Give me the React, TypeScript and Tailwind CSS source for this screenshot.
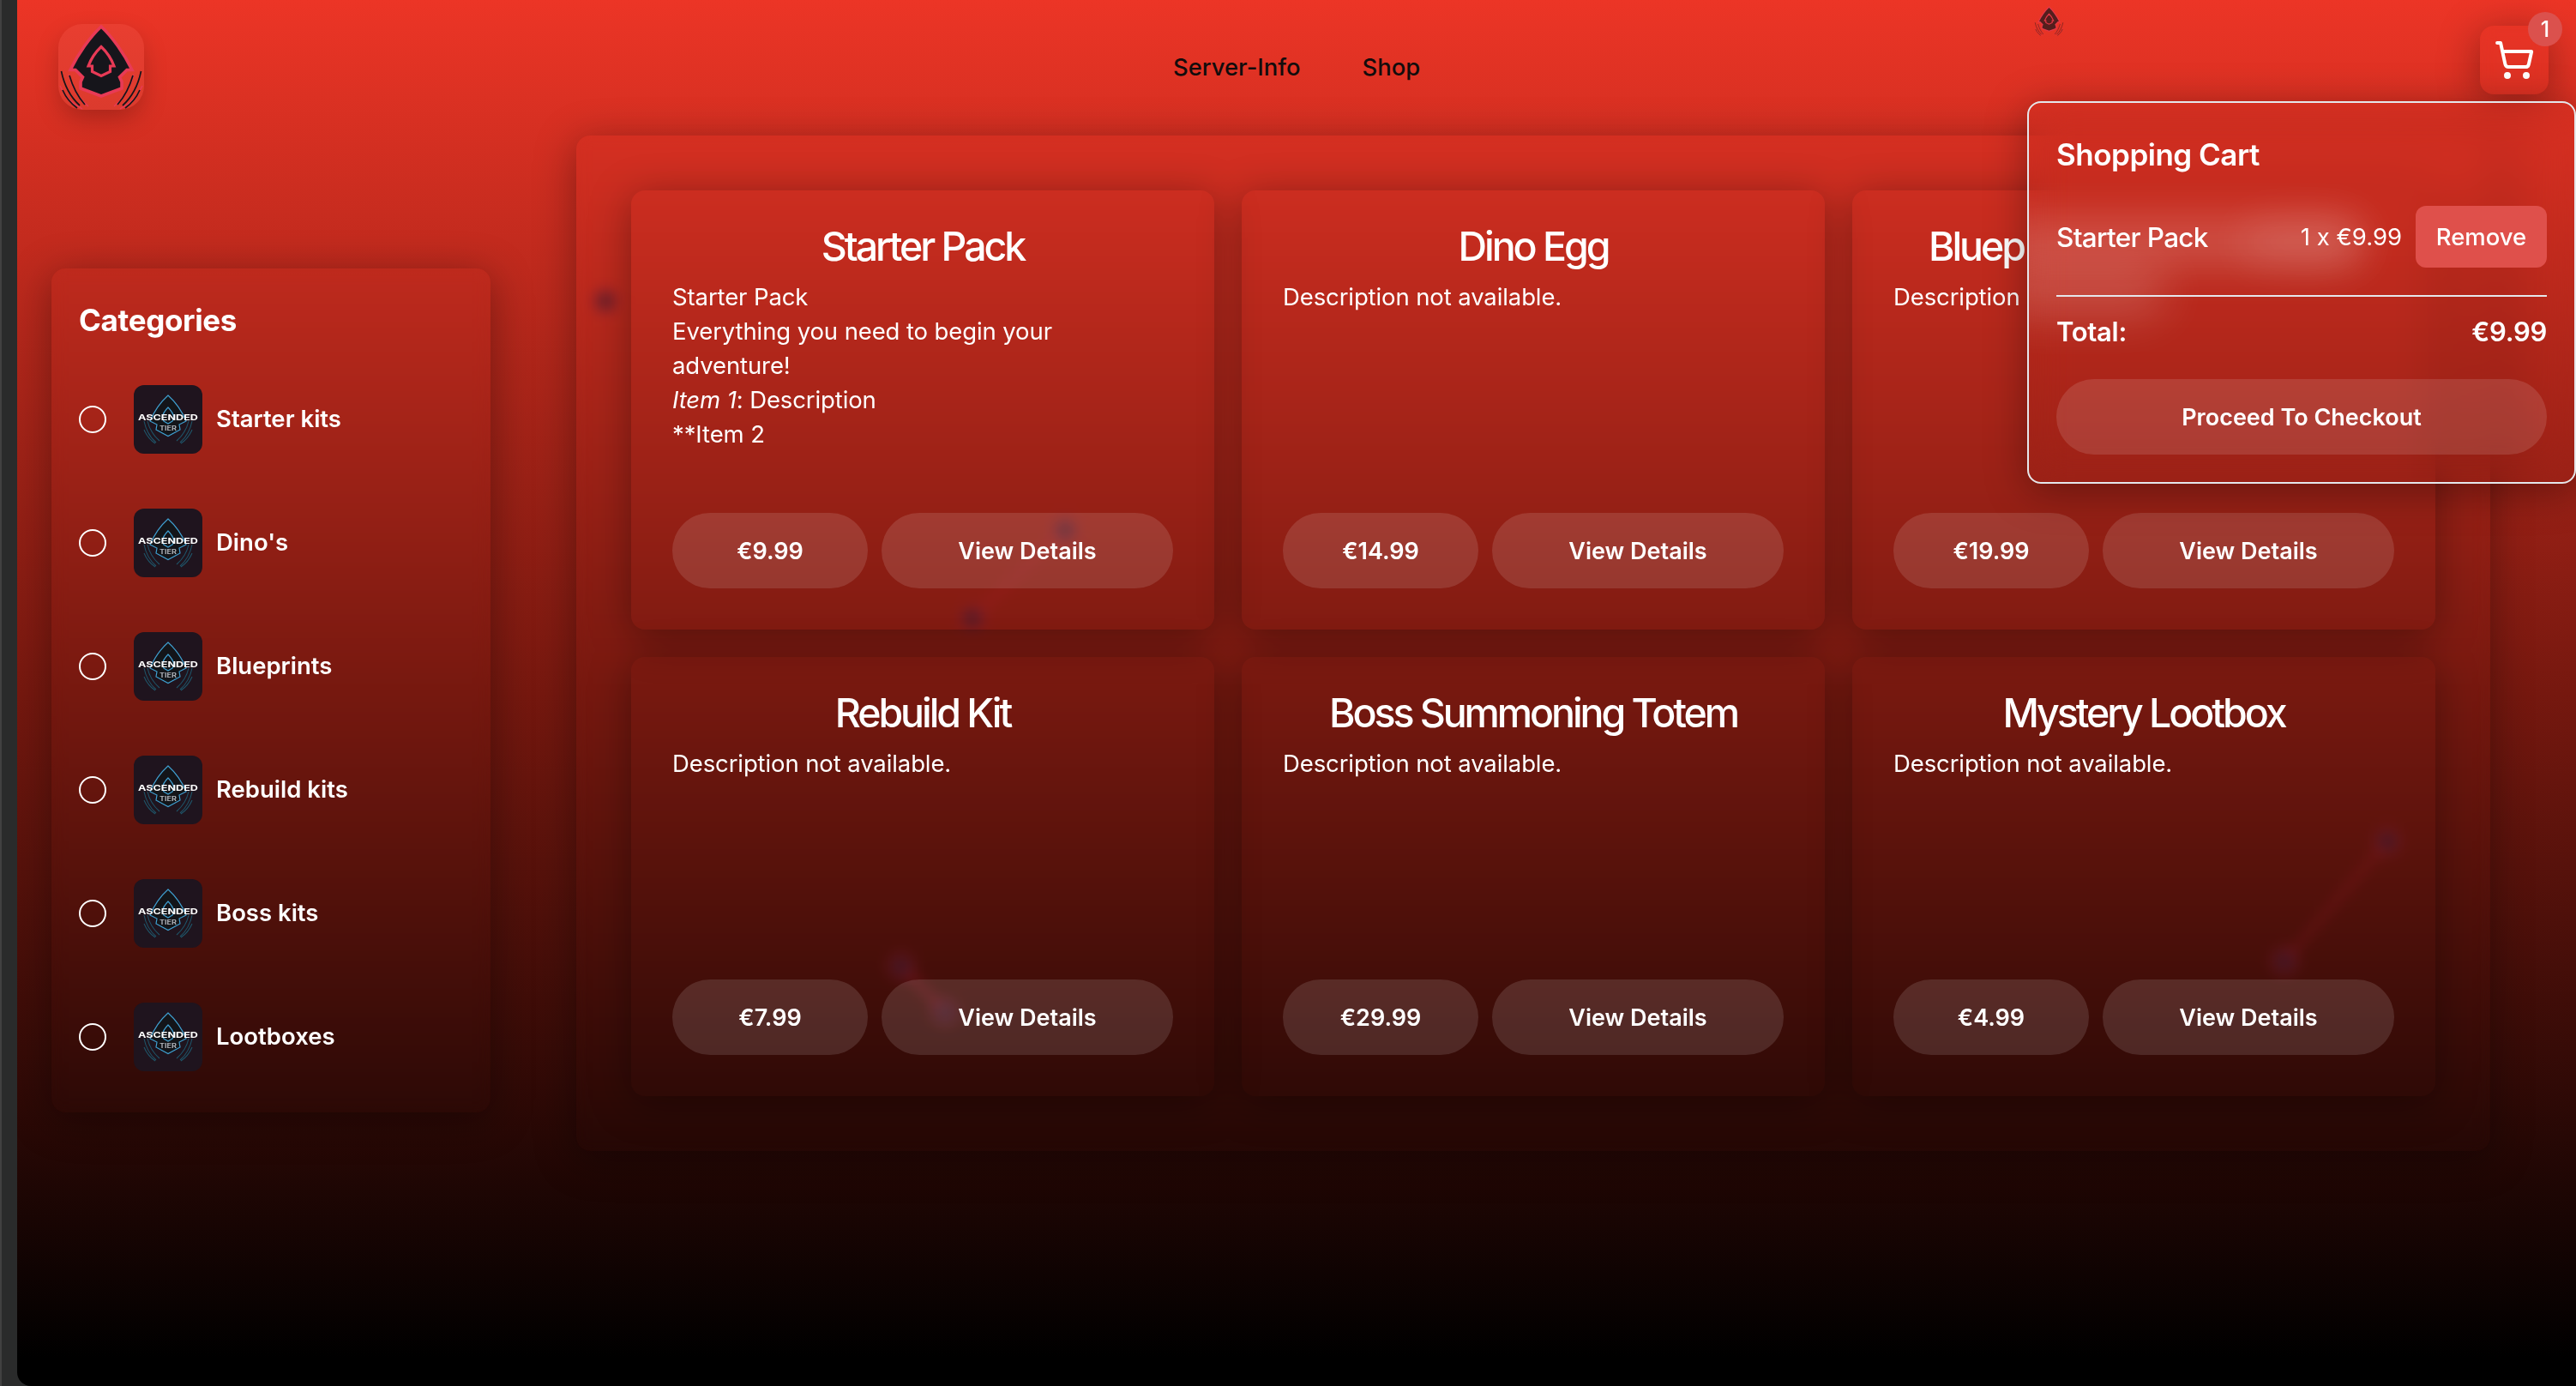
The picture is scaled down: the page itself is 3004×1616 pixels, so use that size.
import React from "react";
import { ShoppingCart } from "lucide-react";

const CATEGORIES = ["Starter kits", "Dino's", "Blueprints", "Rebuild kits", "Boss kits", "Lootboxes"];

type Product = { name: string; price: string; body?: React.ReactNode; covered?: boolean };

const PRODUCTS: Product[] = [
  {
    name: "Starter Pack",
    price: "€9.99",
    body: (
      <>
        Starter Pack
        <br />
        Everything you need to begin your
        <br />
        adventure!
        <br />
        <em>Item 1</em>: Description
        <br />
        **Item 2
      </>
    ),
  },
  { name: "Dino Egg", price: "€14.99" },
  { name: "Bluep", price: "€19.99", body: "Description", covered: true },
  { name: "Rebuild Kit", price: "€7.99" },
  { name: "Boss Summoning Totem", price: "€29.99" },
  { name: "Mystery Lootbox", price: "€4.99" },
];

function Emblem({ className }: { className: string }) {
  return (
    <svg viewBox="0 0 100 100" className={className} fill="none">
      <path
        d="M50 3C37 15 23 35 14 53.500H20L28.500 62L26 67.500V75L50 84L74 75V67.500L71.500 62L80 53.500H86C77 35 63 15 50 3Z"
        fill="#16151b"
        stroke="#e83a56"
        strokeWidth="3.6"
      />
      <path
        d="M50 26.500C43 33 38 41 35 49H39.500V55.500L50 60.500L60.500 55.500V49H65C62 41 57 33 50 26.500Z"
        stroke="#e83a56"
        strokeWidth="3.2"
      />
      <path
        d="M2 72C7 84 16 93 28 99M98 72C93 84 84 93 72 99M12 59C16 74 23 86 35 96M88 59C84 74 77 86 65 96"
        stroke="#e83a56"
        strokeWidth="1.4"
      />
      <path
        d="M3.500 55C7 72 14 85 25 95M96.500 55C93 72 86 85 75 95M5 77C9 86 15 93 22 98M95 77C91 86 85 93 78 98M13 60C17 74 23 85 31 94M87 60C83 74 77 85 69 94"
        stroke="#16151b"
        strokeWidth="1.7"
      />
    </svg>
  );
}

function Thumb() {
  return (
    <svg viewBox="0 0 80 80" className="size-20 shrink-0 rounded-xl bg-[#1f141e]" fill="none">
      <path
        d="M40 12C31 20 24 30 19 42L27 46L26 52L40 59.500L54 52L53 46L61 42C56 30 49 20 40 12Z"
        fill="#131519"
        stroke="#3f9fd0"
        strokeWidth="1.200"
      />
      <path d="M40 26C37 29 34 33 33 38L35 42L40 45L45 42L47 38C46 33 43 29 40 26Z" stroke="#3f9fd0" strokeWidth="1.200" />
      <path
        d="M12 42C14 52 18 60 26 67M12 52C15 59 19 64 25 68M16 42C18 51 22 58 30 65M68 42C66 52 62 60 54 67M68 52C65 59 61 64 55 68M64 42C62 51 58 58 50 65"
        stroke="#1f5468"
        strokeWidth="1.100"
      />
      <text x="40" y="40.500" textAnchor="middle" textLength="70" lengthAdjust="spacingAndGlyphs" fontSize="9" fontWeight="700" fontFamily="Inter, sans-serif" fill="#fff">
        ASCENDED
      </text>
      <text x="40" y="53" textAnchor="middle" textLength="20" lengthAdjust="spacingAndGlyphs" fontSize="7" fontWeight="600" fontFamily="Inter, sans-serif" fill="#b9bcc2">
        TIER
      </text>
    </svg>
  );
}

const PARTICLES = [
  [686, 351],
  [1222, 618],
  [1114, 721],
  [2764, 981],
  [2644, 1121],
  [1031, 1127],
  [1082, 1180],
];

function Particles() {
  return (
    <svg className="pointer-events-none absolute inset-0 size-full" viewBox="0 0 2984 1616">
      <g stroke="#c0203a" strokeWidth="5" opacity="0.3">
        <path d="M1222 618L1114 721" />
        <path d="M2764 981L2644 1121" />
        <path d="M1031 1127L1082 1180" strokeWidth="8" />
      </g>
      <g fill="#2c1a30" stroke="#a02038" strokeWidth="4" opacity="0.55">
        {PARTICLES.map(([x, y]) => (
          <circle key={x} cx={x} cy={y} r="13" />
        ))}
      </g>
    </svg>
  );
}

function ProductCard({ product }: { product: Product }) {
  return (
    <article className="flex h-[512px] flex-col rounded-2xl px-12 pt-8 pb-12 shadow-[0_8px_48px_rgba(0,0,0,0.35)] backdrop-blur-[8px]">
      <h3
        className={
          "mb-1.5 text-[46.5px] leading-[66px] font-medium tracking-[-0.066em] whitespace-nowrap " +
          (product.covered ? "pl-[41px] text-left" : "text-center")
        }
      >
        {product.name}
      </h3>
      <p className="text-[27.500px] leading-10 tracking-[-0.004em]">{product.body ?? "Description not available."}</p>
      <div className="mt-auto flex gap-4">
        <button className="h-22 w-57 rounded-full bg-white/12 pt-0.5 text-[27px] font-semibold">{product.price}</button>
        <button className="h-22 flex-1 rounded-full bg-white/12 pt-0.5 text-[27px] font-semibold">View Details</button>
      </div>
    </article>
  );
}

function Cart() {
  return (
    <div className="absolute top-[118px] right-0 z-20 h-[446px] w-[640px] rounded-2xl border-2 border-gray-200 px-8 shadow-[0_8px_48px_rgba(0,0,0,0.35)] backdrop-blur-[24px]">
      <div className="pointer-events-none absolute inset-0 overflow-hidden rounded-[14px]">
        <div className="absolute top-[134px] -left-10 h-14 w-[430px] rounded-full bg-white/18 blur-[24px]" />
        <div className="absolute top-[192px] -left-10 h-14 w-[200px] rounded-full bg-white/18 blur-[26px]" />
        <div className="absolute top-[134px] left-[250px] h-14 w-[140px] rounded-full bg-white/10 blur-[24px]" />
      </div>
      <div className="relative">
        <h2 className="pt-8 text-[35px] leading-[56px] font-semibold tracking-[-0.014em]">Shopping Cart</h2>
        <div className="mt-8 flex h-18 items-center">
          <span className="pt-0.5 text-[31.5px] font-medium tracking-[-0.022em]">Starter Pack</span>
          <span className="mr-4 ml-auto pt-0.5 text-[27.500px]">1 x €9.99</span>
          <button className="h-18 w-[153px] rounded-xl bg-[#df504b] pt-0.5 text-[27.500px] font-medium">Remove</button>
        </div>
        <div className="mt-8 flex items-center justify-between border-t-2 border-gray-200 pt-4 text-[31px] leading-[50px] font-semibold tracking-[-0.01em]">
          <span>Total:</span>
          <span>€9.99</span>
        </div>
        <button className="mt-[30px] h-22 w-full rounded-full bg-white/12 pt-0.5 text-[27px] font-semibold">Proceed To Checkout</button>
      </div>
    </div>
  );
}

export default function App() {
  return (
    <div className="h-[1616px] w-[3004px] overflow-hidden border-l-2 border-[#414141] bg-[#2a2b2b] pl-[18px] font-['Inter',sans-serif] text-white">
      <div className="relative h-full overflow-hidden rounded-bl-[16px] bg-[linear-gradient(to_bottom,#ec3526_0%,#76180f_50%,#000_98%)]">
        <Particles />
        <Emblem className="absolute top-[7px] left-[2352px] size-[35px] opacity-70" />
        <header className="relative flex h-[158px] items-start">
          <div className="mt-7 ml-12 size-[100px] overflow-hidden rounded-[28px] bg-white/5 shadow-[0_12px_30px_-4px_rgba(0,0,0,0.25)]">
            <Emblem className="size-full" />
          </div>
          <nav className="mt-[58px] ml-[1200px] flex gap-[72px] text-[27.400px] leading-10 font-medium text-[#120c0c]">
            <a>Server-Info</a>
            <a>Shop</a>
          </nav>
        </header>
        <main className="flex items-start">
          <aside className="mt-[155px] ml-10 h-[984px] w-[512px] rounded-2xl px-8 pt-9 shadow-[0_8px_48px_rgba(0,0,0,0.35)] backdrop-blur-[8px]">
            <h2 className="text-[35px] leading-[48px] font-bold tracking-[-0.01em]">Categories</h2>
            <ul className="mt-[52px] flex flex-col gap-16">
              {CATEGORIES.map((name) => (
                <li key={name} className="flex h-20 items-center">
                  <span className="mr-8 size-8 rounded-full border-2 border-white" />
                  <Thumb />
                  <span className="ml-4 text-[27.500px] font-semibold">{name}</span>
                </li>
              ))}
            </ul>
          </aside>
          <section className="ml-[100px] grid h-[1184px] w-[2232px] grid-cols-3 content-start gap-8 rounded-2xl p-16 shadow-[0_8px_48px_rgba(0,0,0,0.35)] backdrop-blur-[8px]">
            {PRODUCTS.map((product) => (
              <ProductCard key={product.name} product={product} />
            ))}
          </section>
        </main>
        <div className="absolute top-[30px] right-8 z-10 flex size-20 items-center justify-center rounded-2xl shadow-[0_8px_48px_rgba(0,0,0,0.35)] backdrop-blur-[8px]">
          <ShoppingCart className="size-12" strokeWidth={2} />
          <span className="absolute -top-4 -right-4 flex size-10 items-center justify-center rounded-full bg-[#db514d] pt-px text-[25px] font-medium">1</span>
        </div>
        <Cart />
      </div>
    </div>
  );
}
